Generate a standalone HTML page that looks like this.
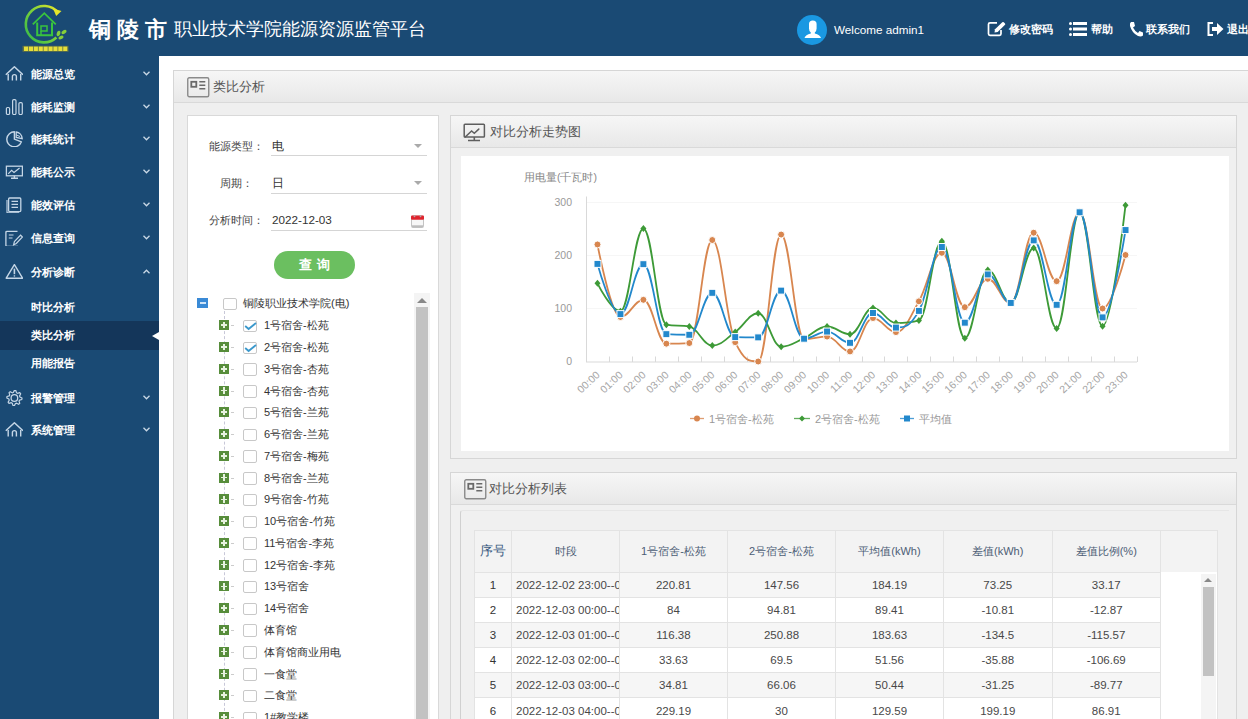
<!DOCTYPE html>
<html><head><meta charset="utf-8">
<style>
*{box-sizing:border-box}
html,body{margin:0;padding:0}
body{width:1248px;height:719px;overflow:hidden;position:relative;background:#fff;font-family:"Liberation Sans",sans-serif;color:#333}
.abs{position:absolute}
#hdr{left:0;top:0;width:1248px;height:56px;background:#1a4a74}
#side{left:0;top:56px;width:159px;height:663px;background:#1a4a74}
.mi{position:absolute;left:0;width:159px;height:32px;color:#fff;font-size:11px;font-weight:bold}
.mi .ic{position:absolute;left:5px;top:8px;width:18px;height:16px}
.mi .tx{position:absolute;left:31px;top:0;line-height:32px;white-space:nowrap}
.mi .ch{position:absolute;left:143px;top:13px;width:7px;height:5px}
.sub{position:absolute;left:0;width:159px;height:28px;color:#fff;font-size:11px;font-weight:bold}
.sub .tx{position:absolute;left:31px;line-height:28px}
.panel{position:absolute;border:1px solid #d6d6d6;background:#f0f0f0;overflow:hidden}
.ph{position:absolute;left:0;top:0;right:0;height:31px;background:linear-gradient(#f6f6f6,#e8e8e8);border-bottom:1px solid #d9d9d9}
.pt{position:absolute;top:0;line-height:31px;font-size:13px;color:#555;white-space:nowrap}
.icbox{position:absolute;width:22px;height:19px;border:2px solid #777;border-radius:2px}
.tr{position:absolute;left:0;height:22px;font-size:11px;color:#333;white-space:nowrap}
.tr .pl{position:absolute;left:31px;top:6px;width:10px;height:10px;background:#578d3b}
.tr .pl:before{content:"";position:absolute;left:4.2px;top:1.8px;width:1.6px;height:6.4px;background:#e8f2e0}
.tr .pl:after{content:"";position:absolute;left:1.8px;top:4.2px;width:6.4px;height:1.6px;background:#e8f2e0}
.tr .dash{position:absolute;left:43px;top:11px;width:3px;height:1px;background:#ccc}
.tr .cb{position:absolute;left:55px;top:5.5px;width:14px;height:12.5px;border:1px solid #c8c8c8;border-radius:2px;background:#fff}
.tr .lb{position:absolute;left:76px;top:0;line-height:22px}
table{border-collapse:collapse}
#tbl td{border:1px solid #e3e3e3;height:25.2px;text-align:center;font-size:11.5px;color:#484848;padding:0;background:#fff}
#tbl tr.hd td{height:42px;background:#f3f3f3;color:#4c5d75;font-size:11px}
#tbl tr.g td{background:#f6f6f6}
</style></head>
<body>
<div id="hdr" class="abs">
  <!-- logo -->
  <svg class="abs" style="left:0;top:0" width="80" height="56" viewBox="0 0 80 56">
    <defs><linearGradient id="lg" x1="0" y1="1" x2="1" y2="0"><stop offset="0" stop-color="#2fb84a"/><stop offset="0.55" stop-color="#7ed23a"/><stop offset="1" stop-color="#e8e82a"/></linearGradient></defs>
    <path d="M57.94,12.50 A18.2,18.2 0 1 0 56.41,37.51" fill="none" stroke="url(#lg)" stroke-width="2.6"/>
    <path d="M53,8.6 L61.5,11 L56.2,16 Z" fill="#e4e62a"/>
    <path d="M32.8,24.3 L44.3,13.2 L55.8,24.3" fill="none" stroke="#39c43e" stroke-width="1.8"/>
    <path d="M37.2,22.5 V35.3 H52 V22.5" fill="none" stroke="#39c43e" stroke-width="2"/>
    <rect x="41" y="26" width="6" height="5" fill="none" stroke="#39c43e" stroke-width="1.5"/>
    <path d="M41,31 V35" stroke="#39c43e" stroke-width="1.5"/>
    <ellipse cx="58.5" cy="33.5" rx="1.8" ry="2.8" fill="#86cf3a" transform="rotate(20 58.5 33.5)"/>
    <ellipse cx="64" cy="32" rx="2.8" ry="1.8" fill="#86cf3a" transform="rotate(-30 64 32)"/>
    <ellipse cx="61" cy="37.5" rx="2.6" ry="1.7" fill="#86cf3a" transform="rotate(-20 61 37.5)"/>
    <rect x="22.5" y="45.8" width="46" height="6" fill="#8a8a30" opacity="0.6"/>
    <rect x="24.0" y="46.6" width="4.1" height="4.4" fill="#e6de3a"/><rect x="28.9" y="46.6" width="4.1" height="4.4" fill="#e6de3a"/><rect x="33.8" y="46.6" width="4.1" height="4.4" fill="#e6de3a"/><rect x="38.7" y="46.6" width="4.1" height="4.4" fill="#e6de3a"/><rect x="43.6" y="46.6" width="4.1" height="4.4" fill="#e6de3a"/><rect x="48.5" y="46.6" width="4.1" height="4.4" fill="#e6de3a"/><rect x="53.4" y="46.6" width="4.1" height="4.4" fill="#e6de3a"/><rect x="58.3" y="46.6" width="4.1" height="4.4" fill="#e6de3a"/><rect x="63.2" y="46.6" width="4.1" height="4.4" fill="#e6de3a"/>
  </svg>
  <div class="abs" style="left:89px;top:16px;font-size:22px;font-weight:bold;color:#fff;letter-spacing:6px;line-height:28px;font-family:'Liberation Serif',serif">铜陵市</div>
  <div class="abs" style="left:174px;top:16.5px;font-size:18px;color:#fff;line-height:24px;white-space:nowrap">职业技术学院能源资源监管平台</div>
  <div class="abs" style="left:797px;top:15px;width:30px;height:30px;border-radius:50%;background:#1a98e2;overflow:hidden">
    <svg width="30" height="30" viewBox="0 0 30 30"><path d="M12,9 Q12,5.5 15.8,5.5 Q19.6,5.5 19.6,9 V13.5 Q19.6,16 17.8,17.5 V18.5 Q23,19.5 24,23 H7.5 Q8.5,19.5 13.8,18.5 V17.5 Q12,16 12,13.5 Z" fill="#fff"/></svg>
  </div>
  <div class="abs" style="left:834px;top:23px;font-size:11.7px;color:#fff;line-height:14px;white-space:nowrap">Welcome admin1</div>
  <svg class="abs" style="left:987px;top:21px" width="20" height="16" viewBox="0 0 20 16"><path d="M10,1.8 H3 Q1.5,1.8 1.5,3.3 V12.8 Q1.5,14.3 3,14.3 H12.5 Q14,14.3 14,12.8 V9" fill="none" stroke="#fff" stroke-width="1.7"/><path d="M7.5,11.5 L8,8.3 L15.3,1.2 Q16,0.6 16.8,1.3 L18,2.5 Q18.6,3.2 18,3.8 L10.7,11 Z" fill="#fff"/></svg>
  <div class="abs" style="left:1009px;top:22px;font-size:10.7px;font-weight:bold;color:#fff;line-height:14px;white-space:nowrap">修改密码</div>
  <svg class="abs" style="left:1069px;top:22px" width="18" height="14" viewBox="0 0 18 14"><circle cx="1.5" cy="1.5" r="1.5" fill="#fff"/><circle cx="1.5" cy="7" r="1.5" fill="#fff"/><circle cx="1.5" cy="12.5" r="1.5" fill="#fff"/><rect x="4" y="0" width="14" height="3" fill="#fff"/><rect x="4" y="5.5" width="14" height="3" fill="#fff"/><rect x="4" y="11" width="14" height="3" fill="#fff"/></svg>
  <div class="abs" style="left:1091px;top:22px;font-size:10.7px;font-weight:bold;color:#fff;line-height:14px;white-space:nowrap">帮助</div>
  <svg class="abs" style="left:1129px;top:21px" width="15" height="16" viewBox="0 0 15 16"><path d="M2,1 L5,1 L6,5 L4,6.5 Q6,10.5 9,12 L10.5,10 L14,11.5 L14,14.5 Q12,16 9,15 Q3,12 1,5 Q0.5,2 2,1 Z" fill="#fff"/></svg>
  <div class="abs" style="left:1146px;top:22px;font-size:10.7px;font-weight:bold;color:#fff;line-height:14px;white-space:nowrap">联系我们</div>
  <svg class="abs" style="left:1207px;top:22px" width="17" height="14" viewBox="0 0 17 14"><path d="M6,1 H1.5 V13 H6" fill="none" stroke="#fff" stroke-width="2"/><path d="M5,5 H10 V1 L16.5,7 L10,13 V9 H5 Z" fill="#fff"/></svg>
  <div class="abs" style="left:1227px;top:22px;font-size:10.7px;font-weight:bold;color:#fff;line-height:14px;white-space:nowrap">退出</div>
</div>

<div id="side" class="abs">
<div class="mi" style="top:2px"><svg class="ic" viewBox="0 0 18 16"><path d="M0.8,8.8 L9.4,0.8 L18,8.8" fill="none" stroke="#c5d6e6" stroke-width="1.5" stroke-linejoin="round"/><path d="M3.2,8 V14.5 M15.7,8 V14.5 M7.4,14.5 V10.5 Q7.4,8.6 9.4,8.6 Q11.4,8.6 11.4,10.5 V14.5" fill="none" stroke="#c5d6e6" stroke-width="1.4"/></svg><div class="tx">能源总览</div><svg class="ch" viewBox="0 0 7 5"><path d="M0.5,0.8 L3.5,3.8 L6.5,0.8" fill="none" stroke="#c9d8e6" stroke-width="1.3"/></svg></div>
<div class="mi" style="top:34.5px"><svg class="ic" viewBox="0 0 18 16"><rect x="1.4" y="8.5" width="3.2" height="7" rx="1.2" fill="none" stroke="#c5d6e6" stroke-width="1.2"/><rect x="7.6" y="0.6" width="3.4" height="14.9" rx="1.2" fill="none" stroke="#c5d6e6" stroke-width="1.2"/><rect x="13.9" y="3.6" width="3.4" height="11.9" rx="1.2" fill="none" stroke="#c5d6e6" stroke-width="1.2"/></svg><div class="tx">能耗监测</div><svg class="ch" viewBox="0 0 7 5"><path d="M0.5,0.8 L3.5,3.8 L6.5,0.8" fill="none" stroke="#c9d8e6" stroke-width="1.3"/></svg></div>
<div class="mi" style="top:67px"><svg class="ic" viewBox="0 0 18 16"><path d="M9.4,0.8 A7.5,7.5 0 1 0 16.4,10.8 L9.4,8.2 Z" fill="none" stroke="#c5d6e6" stroke-width="1.4" stroke-linejoin="round"/><path d="M11.2,1 A7,7 0 0 1 17.2,7.6 L11.2,6.5 Z" fill="none" stroke="#c5d6e6" stroke-width="1.3"/><path d="M11.5,4 L15,5.5" stroke="#c5d6e6" stroke-width="1"/></svg><div class="tx">能耗统计</div><svg class="ch" viewBox="0 0 7 5"><path d="M0.5,0.8 L3.5,3.8 L6.5,0.8" fill="none" stroke="#c9d8e6" stroke-width="1.3"/></svg></div>
<div class="mi" style="top:100px"><svg class="ic" viewBox="0 0 18 16"><rect x="1.4" y="2.2" width="16" height="9.6" fill="none" stroke="#c5d6e6" stroke-width="1.3"/><path d="M3.2,9.8 L6.6,6.4 L9,8.4 L14.6,4" fill="none" stroke="#c5d6e6" stroke-width="1.2"/><path d="M6,14.2 H13 M9.4,11.8 V14" stroke="#c5d6e6" stroke-width="1.4"/></svg><div class="tx">能耗公示</div><svg class="ch" viewBox="0 0 7 5"><path d="M0.5,0.8 L3.5,3.8 L6.5,0.8" fill="none" stroke="#c9d8e6" stroke-width="1.3"/></svg></div>
<div class="mi" style="top:132.5px"><svg class="ic" viewBox="0 0 18 16"><rect x="3.6" y="1" width="12.2" height="13.6" rx="1" fill="none" stroke="#c5d6e6" stroke-width="1.3"/><path d="M2,3 V15.8 H14" fill="none" stroke="#c5d6e6" stroke-width="1.1"/><path d="M6.5,4.4 H13 M6.5,7.3 H13 M6.5,10.4 H13" stroke="#c5d6e6" stroke-width="1.3"/></svg><div class="tx">能效评估</div><svg class="ch" viewBox="0 0 7 5"><path d="M0.5,0.8 L3.5,3.8 L6.5,0.8" fill="none" stroke="#c9d8e6" stroke-width="1.3"/></svg></div>
<div class="mi" style="top:165.5px"><svg class="ic" viewBox="0 0 18 16"><path d="M12.5,1.3 H2 Q0.9,1.3 0.9,2.4 V15.2 Q0.9,16.3 2,16.3 H13" fill="none" stroke="#c5d6e6" stroke-width="1.3"/><path d="M3.8,5 H8.5 M3.8,8 H7.5" stroke="#c5d6e6" stroke-width="1.2"/><path d="M8.6,14.8 L9.4,11.6 L15.6,5.2 L17.5,7 L11.3,13.5 Z" fill="none" stroke="#c5d6e6" stroke-width="1.2"/></svg><div class="tx">信息查询</div><svg class="ch" viewBox="0 0 7 5"><path d="M0.5,0.8 L3.5,3.8 L6.5,0.8" fill="none" stroke="#c9d8e6" stroke-width="1.3"/></svg></div>
<div class="mi" style="top:199.5px"><svg class="ic" viewBox="0 0 18 16"><path d="M9.4,0.6 L17.6,14.2 H1.2 Z" fill="none" stroke="#c5d6e6" stroke-width="1.4" stroke-linejoin="round"/><path d="M9.4,4.6 V10.2" stroke="#c5d6e6" stroke-width="1.6"/><path d="M9.4,11.3 V12.6" stroke="#c5d6e6" stroke-width="1.4"/></svg><div class="tx">分析诊断</div><svg class="ch" viewBox="0 0 7 5"><path d="M0.5,4.2 L3.5,1.2 L6.5,4.2" fill="none" stroke="#c9d8e6" stroke-width="1.3"/></svg></div>
<div class="mi" style="top:325.5px"><svg class="ic" viewBox="0 0 18 16"><path d="M9.40,0.40 L10.88,0.55 L11.54,2.83 L12.51,3.34 L14.77,2.63 L15.72,3.78 L14.57,5.86 L14.89,6.91 L17.00,8.00 L16.85,9.48 L14.57,10.14 L14.06,11.11 L14.77,13.37 L13.62,14.32 L11.54,13.17 L10.49,13.49 L9.40,15.60 L7.92,15.45 L7.26,13.17 L6.29,12.66 L4.03,13.37 L3.08,12.22 L4.23,10.14 L3.91,9.09 L1.80,8.00 L1.95,6.52 L4.23,5.86 L4.74,4.89 L4.03,2.63 L5.18,1.68 L7.26,2.83 L8.31,2.51 Z" fill="none" stroke="#c5d6e6" stroke-width="1.2" stroke-linejoin="round"/><circle cx="9.4" cy="8" r="3.3" fill="none" stroke="#c5d6e6" stroke-width="1.3"/></svg><div class="tx">报警管理</div><svg class="ch" viewBox="0 0 7 5"><path d="M0.5,0.8 L3.5,3.8 L6.5,0.8" fill="none" stroke="#c9d8e6" stroke-width="1.3"/></svg></div>
<div class="mi" style="top:358px"><svg class="ic" viewBox="0 0 18 16"><path d="M0.8,8.8 L9.4,0.8 L18,8.8" fill="none" stroke="#c5d6e6" stroke-width="1.5" stroke-linejoin="round"/><path d="M3.2,8 V14.5 M15.7,8 V14.5 M7.4,14.5 V10.5 Q7.4,8.6 9.4,8.6 Q11.4,8.6 11.4,10.5 V14.5" fill="none" stroke="#c5d6e6" stroke-width="1.4"/></svg><div class="tx">系统管理</div><svg class="ch" viewBox="0 0 7 5"><path d="M0.5,0.8 L3.5,3.8 L6.5,0.8" fill="none" stroke="#c9d8e6" stroke-width="1.3"/></svg></div>
<div class="abs" style="left:0;top:265px;width:159px;height:29px;background:#14365a"></div>
<div class="sub" style="top:237px"><div class="tx">时比分析</div></div>
<div class="sub" style="top:265px"><div class="tx">类比分析</div></div>
<div class="sub" style="top:292.5px"><div class="tx">用能报告</div></div>
<div class="abs" style="left:152px;top:275.5px;width:0;height:0;border-top:4.5px solid transparent;border-bottom:4.5px solid transparent;border-right:7px solid #fff"></div>
</div>

<!-- outer panel -->
<div class="panel" style="left:173px;top:70px;width:1090px;height:670px;background:#efefef">
  <div class="ph" style="height:32px"></div>
  <svg class="abs" style="left:12.5px;top:6px" width="23" height="21" viewBox="0 0 23 21"><rect x="0.75" y="0.75" width="21" height="19" rx="1.5" fill="none" stroke="#8a8a8a" stroke-width="1.4"/><rect x="4.3" y="4.8" width="5" height="5" fill="none" stroke="#6a6a6a" stroke-width="1.8"/><path d="M12.3,4.8 H18.3 M12.3,8.3 H18.3 M12.3,11.8 H18.3" stroke="#6a6a6a" stroke-width="1.6"/></svg>
  <div class="pt" style="left:39px;line-height:32px;font-size:13px;color:#555">类比分析</div>
</div>

<!-- left panel -->
<div class="abs" style="left:187px;top:115px;width:252px;height:620px;background:#fff;border:1px solid #d9d9d9">
<div class="abs" style="left:21px;top:21.5px;font-size:11px;color:#444;line-height:16px;white-space:nowrap">能源类型：</div>
<div class="abs" style="left:84px;top:21.5px;font-size:11.7px;color:#333;line-height:16px;white-space:nowrap">电</div>
<div class="abs" style="left:83px;top:39px;width:156px;height:1px;background:#d5d5d5"></div>
<div class="abs" style="left:226px;top:28px;width:0;height:0;border-left:4.5px solid transparent;border-right:4.5px solid transparent;border-top:4.5px solid #aaa"></div>
<div class="abs" style="left:32px;top:58.5px;font-size:11px;color:#444;line-height:16px;white-space:nowrap">周期：</div>
<div class="abs" style="left:84px;top:58.5px;font-size:11.7px;color:#333;line-height:16px;white-space:nowrap">日</div>
<div class="abs" style="left:83px;top:77px;width:156px;height:1px;background:#d5d5d5"></div>
<div class="abs" style="left:226px;top:65px;width:0;height:0;border-left:4.5px solid transparent;border-right:4.5px solid transparent;border-top:4.5px solid #aaa"></div>
<div class="abs" style="left:21px;top:95.5px;font-size:11px;color:#444;line-height:16px;white-space:nowrap">分析时间：</div>
<div class="abs" style="left:84px;top:95.5px;font-size:11.7px;color:#333;line-height:16px;white-space:nowrap">2022-12-03</div>
<div class="abs" style="left:83px;top:114px;width:156px;height:1px;background:#d5d5d5"></div>
<svg class="abs" style="left:223px;top:98.5px" width="13" height="13" viewBox="0 0 13 13"><rect x="0.5" y="1" width="12" height="11.5" rx="1" fill="#f7f7f7" stroke="#c4c4c4"/><rect x="0" y="0.5" width="13" height="4.3" rx="1" fill="#e0242e"/><rect x="1" y="10.3" width="11" height="2" fill="#bdbdbd"/><circle cx="3.5" cy="1.3" r="0.9" fill="#aaa"/><circle cx="9.5" cy="1.3" r="0.9" fill="#aaa"/></svg>
<div class="abs" style="left:86px;top:134.5px;width:81px;height:28.5px;border-radius:15px;background:#6bbf60;color:#fff;font-size:13px;font-weight:bold;text-align:center;line-height:27px;letter-spacing:5px;text-indent:5px">查询</div>
<div class="abs" style="left:9px;top:182px;width:11px;height:10px;background:#3a8ad6"><div class="abs" style="left:2.5px;top:4.2px;width:6px;height:1.6px;background:#cfe4f8"></div></div>
<div class="abs" style="left:35px;top:181.5px;width:14px;height:12.5px;border:1px solid #c8c8c8;border-radius:2px;background:#fff"></div>
<div class="abs" style="left:55px;top:179px;font-size:11px;color:#333;line-height:16px;white-space:nowrap">铜陵职业技术学院(电)</div>
<div class="abs" style="left:36px;top:195px;width:0;height:420px;border-left:1px dashed #c8c8d8"></div>
<div class="tr" style="top:198.3px;left:0px;width:220px"><div class="pl"></div><div class="dash"></div><div class="cb"><svg class="abs" style="left:0;top:0" width="13" height="11" viewBox="0 0 13 11"><path d="M1.2,5 L4.6,8 L12,2" fill="none" stroke="#3a98cc" stroke-width="1.8"/></svg></div><div class="lb">1号宿舍-松苑</div></div>
<div class="tr" style="top:220.1px;left:0px;width:220px"><div class="pl"></div><div class="dash"></div><div class="cb"><svg class="abs" style="left:0;top:0" width="13" height="11" viewBox="0 0 13 11"><path d="M1.2,5 L4.6,8 L12,2" fill="none" stroke="#3a98cc" stroke-width="1.8"/></svg></div><div class="lb">2号宿舍-松苑</div></div>
<div class="tr" style="top:241.8px;left:0px;width:220px"><div class="pl"></div><div class="dash"></div><div class="cb"></div><div class="lb">3号宿舍-杏苑</div></div>
<div class="tr" style="top:263.6px;left:0px;width:220px"><div class="pl"></div><div class="dash"></div><div class="cb"></div><div class="lb">4号宿舍-杏苑</div></div>
<div class="tr" style="top:285.3px;left:0px;width:220px"><div class="pl"></div><div class="dash"></div><div class="cb"></div><div class="lb">5号宿舍-兰苑</div></div>
<div class="tr" style="top:307.1px;left:0px;width:220px"><div class="pl"></div><div class="dash"></div><div class="cb"></div><div class="lb">6号宿舍-兰苑</div></div>
<div class="tr" style="top:328.9px;left:0px;width:220px"><div class="pl"></div><div class="dash"></div><div class="cb"></div><div class="lb">7号宿舍-梅苑</div></div>
<div class="tr" style="top:350.6px;left:0px;width:220px"><div class="pl"></div><div class="dash"></div><div class="cb"></div><div class="lb">8号宿舍-兰苑</div></div>
<div class="tr" style="top:372.4px;left:0px;width:220px"><div class="pl"></div><div class="dash"></div><div class="cb"></div><div class="lb">9号宿舍-竹苑</div></div>
<div class="tr" style="top:394.1px;left:0px;width:220px"><div class="pl"></div><div class="dash"></div><div class="cb"></div><div class="lb">10号宿舍-竹苑</div></div>
<div class="tr" style="top:415.9px;left:0px;width:220px"><div class="pl"></div><div class="dash"></div><div class="cb"></div><div class="lb">11号宿舍-李苑</div></div>
<div class="tr" style="top:437.7px;left:0px;width:220px"><div class="pl"></div><div class="dash"></div><div class="cb"></div><div class="lb">12号宿舍-李苑</div></div>
<div class="tr" style="top:459.4px;left:0px;width:220px"><div class="pl"></div><div class="dash"></div><div class="cb"></div><div class="lb">13号宿舍</div></div>
<div class="tr" style="top:481.2px;left:0px;width:220px"><div class="pl"></div><div class="dash"></div><div class="cb"></div><div class="lb">14号宿舍</div></div>
<div class="tr" style="top:502.9px;left:0px;width:220px"><div class="pl"></div><div class="dash"></div><div class="cb"></div><div class="lb">体育馆</div></div>
<div class="tr" style="top:524.7px;left:0px;width:220px"><div class="pl"></div><div class="dash"></div><div class="cb"></div><div class="lb">体育馆商业用电</div></div>
<div class="tr" style="top:546.5px;left:0px;width:220px"><div class="pl"></div><div class="dash"></div><div class="cb"></div><div class="lb">一食堂</div></div>
<div class="tr" style="top:568.2px;left:0px;width:220px"><div class="pl"></div><div class="dash"></div><div class="cb"></div><div class="lb">二食堂</div></div>
<div class="tr" style="top:590.0px;left:0px;width:220px"><div class="pl"></div><div class="dash"></div><div class="cb"></div><div class="lb">1#教学楼</div></div>
<div class="abs" style="left:226px;top:177px;width:16px;height:440px;background:#f4f4f4"></div>
<div class="abs" style="left:229px;top:182px;width:0;height:0;border-left:5px solid transparent;border-right:5px solid transparent;border-bottom:5px solid #888"></div>
<div class="abs" style="left:228px;top:191px;width:12px;height:420px;background:#c2c2c2"></div>
</div>

<!-- chart panel -->
<div class="panel" style="left:450px;top:115px;width:787px;height:344px">
  <div class="ph" style="height:32px"></div>
  <div class="abs" style="left:10px;top:39.5px;width:768px;height:295px;background:#fff"></div>
  <div class="pt" style="left:39px;line-height:32px">对比分析走势图</div>
</div>
<svg class="abs" style="left:0;top:0" width="1248" height="719">
<g font-family="Liberation Sans, sans-serif">
<line x1="586" y1="308.5" x2="1137" y2="308.5" stroke="#f6f6f6" stroke-width="1"/>
<line x1="586" y1="255.5" x2="1137" y2="255.5" stroke="#f6f6f6" stroke-width="1"/>
<line x1="586" y1="202.5" x2="1137" y2="202.5" stroke="#f6f6f6" stroke-width="1"/>
<line x1="586.5" y1="196.5" x2="586.5" y2="362.0" stroke="#d9d9d9" stroke-width="1"/>
<line x1="586" y1="362.0" x2="1137" y2="362.0" stroke="#d9d9d9" stroke-width="1"/>
<line x1="609.5" y1="356.5" x2="609.5" y2="362.0" stroke="#d9d9d9" stroke-width="1"/>
<line x1="632.5" y1="356.5" x2="632.5" y2="362.0" stroke="#d9d9d9" stroke-width="1"/>
<line x1="655.5" y1="356.5" x2="655.5" y2="362.0" stroke="#d9d9d9" stroke-width="1"/>
<line x1="678.5" y1="356.5" x2="678.5" y2="362.0" stroke="#d9d9d9" stroke-width="1"/>
<line x1="701.5" y1="356.5" x2="701.5" y2="362.0" stroke="#d9d9d9" stroke-width="1"/>
<line x1="724.5" y1="356.5" x2="724.5" y2="362.0" stroke="#d9d9d9" stroke-width="1"/>
<line x1="747.5" y1="356.5" x2="747.5" y2="362.0" stroke="#d9d9d9" stroke-width="1"/>
<line x1="770.5" y1="356.5" x2="770.5" y2="362.0" stroke="#d9d9d9" stroke-width="1"/>
<line x1="793.5" y1="356.5" x2="793.5" y2="362.0" stroke="#d9d9d9" stroke-width="1"/>
<line x1="816.5" y1="356.5" x2="816.5" y2="362.0" stroke="#d9d9d9" stroke-width="1"/>
<line x1="839.5" y1="356.5" x2="839.5" y2="362.0" stroke="#d9d9d9" stroke-width="1"/>
<line x1="862.5" y1="356.5" x2="862.5" y2="362.0" stroke="#d9d9d9" stroke-width="1"/>
<line x1="884.5" y1="356.5" x2="884.5" y2="362.0" stroke="#d9d9d9" stroke-width="1"/>
<line x1="907.5" y1="356.5" x2="907.5" y2="362.0" stroke="#d9d9d9" stroke-width="1"/>
<line x1="930.5" y1="356.5" x2="930.5" y2="362.0" stroke="#d9d9d9" stroke-width="1"/>
<line x1="953.5" y1="356.5" x2="953.5" y2="362.0" stroke="#d9d9d9" stroke-width="1"/>
<line x1="976.5" y1="356.5" x2="976.5" y2="362.0" stroke="#d9d9d9" stroke-width="1"/>
<line x1="999.5" y1="356.5" x2="999.5" y2="362.0" stroke="#d9d9d9" stroke-width="1"/>
<line x1="1022.5" y1="356.5" x2="1022.5" y2="362.0" stroke="#d9d9d9" stroke-width="1"/>
<line x1="1045.5" y1="356.5" x2="1045.5" y2="362.0" stroke="#d9d9d9" stroke-width="1"/>
<line x1="1068.5" y1="356.5" x2="1068.5" y2="362.0" stroke="#d9d9d9" stroke-width="1"/>
<line x1="1091.5" y1="356.5" x2="1091.5" y2="362.0" stroke="#d9d9d9" stroke-width="1"/>
<line x1="1114.5" y1="356.5" x2="1114.5" y2="362.0" stroke="#d9d9d9" stroke-width="1"/>
<line x1="1137.5" y1="356.5" x2="1137.5" y2="362.0" stroke="#d9d9d9" stroke-width="1"/>
<path d="M597.48,244.47C597.48,244.47 611.25,316.98 620.44,316.98C629.62,316.98 634.21,299.82 643.40,299.82C652.58,299.82 657.17,343.68 666.35,343.68C675.54,343.68 680.13,343.68 689.31,343.05C698.50,342.43 703.09,240.03 712.27,240.03C721.45,240.03 726.05,322.81 735.23,342.15C744.41,361.50 749.00,361.50 758.19,361.50C767.37,361.50 771.96,234.56 781.15,234.56C790.33,234.56 794.92,339.24 804.10,339.24C813.29,339.24 817.88,336.59 827.06,336.59C836.25,336.59 840.84,351.43 850.02,351.43C859.20,351.43 863.80,318.04 872.98,318.04C882.16,318.04 886.75,332.08 895.94,332.08C905.12,332.08 909.71,317.19 918.90,301.35C928.08,285.50 932.67,252.85 941.85,252.85C951.04,252.85 955.63,307.18 964.81,307.18C974.00,307.18 978.59,278.82 987.77,278.82C996.95,278.82 1001.55,303.20 1010.73,303.20C1019.91,303.20 1024.50,232.71 1033.69,232.71C1042.87,232.71 1047.46,281.20 1056.65,281.20C1065.83,281.20 1070.42,212.57 1079.60,212.57C1088.79,212.57 1093.38,308.50 1102.56,308.50C1111.75,308.50 1125.52,254.97 1125.52,254.97" fill="none" stroke="#d8864f" stroke-width="1.8"/>
<path d="M597.48,283.29C597.48,283.29 611.25,311.25 620.44,311.25C629.62,311.25 634.21,228.53 643.40,228.53C652.58,228.53 657.17,322.84 666.35,324.67C675.54,326.49 680.13,324.67 689.31,326.49C698.50,328.31 703.09,345.60 712.27,345.60C721.45,345.60 726.05,338.55 735.23,332.08C744.41,325.62 749.00,313.27 758.19,313.27C767.37,313.27 771.96,346.66 781.15,346.66C790.33,346.66 794.92,342.21 804.10,338.18C813.29,334.15 817.88,326.52 827.06,326.52C836.25,326.52 840.84,334.20 850.02,334.20C859.20,334.20 863.80,307.97 872.98,307.97C882.16,307.97 886.75,323.07 895.94,323.07C905.12,323.07 909.71,323.07 918.90,320.43C928.08,317.78 932.67,241.19 941.85,241.19C951.04,241.19 955.63,338.18 964.81,338.18C974.00,338.18 978.59,270.07 987.77,270.07C996.95,270.07 1001.55,302.67 1010.73,302.67C1019.91,302.67 1024.50,248.08 1033.69,248.08C1042.87,248.08 1047.46,328.38 1056.65,328.38C1065.83,328.38 1070.42,212.04 1079.60,212.04C1088.79,212.04 1093.38,326.25 1102.56,326.25C1111.75,326.25 1125.52,205.15 1125.52,205.15" fill="none" stroke="#3d9a37" stroke-width="1.8"/>
<path d="M597.48,263.88C597.48,263.88 611.25,314.11 620.44,314.11C629.62,314.11 634.21,264.18 643.40,264.18C652.58,264.18 657.17,333.58 666.35,334.17C675.54,334.77 680.13,334.77 689.31,334.77C698.50,334.77 703.09,292.82 712.27,292.82C721.45,292.82 726.05,336.86 735.23,337.12C744.41,337.38 749.00,337.38 758.19,337.38C767.37,337.38 771.96,290.61 781.15,290.61C790.33,290.61 794.92,338.71 804.10,338.71C813.29,338.71 817.88,331.56 827.06,331.56C836.25,331.56 840.84,342.82 850.02,342.82C859.20,342.82 863.80,313.00 872.98,313.00C882.16,313.00 886.75,327.58 895.94,327.58C905.12,327.58 909.71,327.00 918.90,310.88C928.08,294.77 932.67,247.02 941.85,247.02C951.04,247.02 955.63,322.68 964.81,322.68C974.00,322.68 978.59,274.45 987.77,274.45C996.95,274.45 1001.55,302.94 1010.73,302.94C1019.91,302.94 1024.50,240.39 1033.69,240.39C1042.87,240.39 1047.46,304.79 1056.65,304.79C1065.83,304.79 1070.42,212.30 1079.60,212.30C1088.79,212.30 1093.38,317.38 1102.56,317.38C1111.75,317.38 1125.52,230.06 1125.52,230.06" fill="none" stroke="#2288cc" stroke-width="1.8"/>
<circle cx="597.48" cy="244.47" r="3.5" fill="#d8864f" stroke="#fff" stroke-width="1"/>
<circle cx="620.44" cy="316.98" r="3.5" fill="#d8864f" stroke="#fff" stroke-width="1"/>
<circle cx="643.40" cy="299.82" r="3.5" fill="#d8864f" stroke="#fff" stroke-width="1"/>
<circle cx="666.35" cy="343.68" r="3.5" fill="#d8864f" stroke="#fff" stroke-width="1"/>
<circle cx="689.31" cy="343.05" r="3.5" fill="#d8864f" stroke="#fff" stroke-width="1"/>
<circle cx="712.27" cy="240.03" r="3.5" fill="#d8864f" stroke="#fff" stroke-width="1"/>
<circle cx="735.23" cy="342.15" r="3.5" fill="#d8864f" stroke="#fff" stroke-width="1"/>
<circle cx="758.19" cy="361.50" r="3.5" fill="#d8864f" stroke="#fff" stroke-width="1"/>
<circle cx="781.15" cy="234.56" r="3.5" fill="#d8864f" stroke="#fff" stroke-width="1"/>
<circle cx="804.10" cy="339.24" r="3.5" fill="#d8864f" stroke="#fff" stroke-width="1"/>
<circle cx="827.06" cy="336.59" r="3.5" fill="#d8864f" stroke="#fff" stroke-width="1"/>
<circle cx="850.02" cy="351.43" r="3.5" fill="#d8864f" stroke="#fff" stroke-width="1"/>
<circle cx="872.98" cy="318.04" r="3.5" fill="#d8864f" stroke="#fff" stroke-width="1"/>
<circle cx="895.94" cy="332.08" r="3.5" fill="#d8864f" stroke="#fff" stroke-width="1"/>
<circle cx="918.90" cy="301.35" r="3.5" fill="#d8864f" stroke="#fff" stroke-width="1"/>
<circle cx="941.85" cy="252.85" r="3.5" fill="#d8864f" stroke="#fff" stroke-width="1"/>
<circle cx="964.81" cy="307.18" r="3.5" fill="#d8864f" stroke="#fff" stroke-width="1"/>
<circle cx="987.77" cy="278.82" r="3.5" fill="#d8864f" stroke="#fff" stroke-width="1"/>
<circle cx="1010.73" cy="303.20" r="3.5" fill="#d8864f" stroke="#fff" stroke-width="1"/>
<circle cx="1033.69" cy="232.71" r="3.5" fill="#d8864f" stroke="#fff" stroke-width="1"/>
<circle cx="1056.65" cy="281.20" r="3.5" fill="#d8864f" stroke="#fff" stroke-width="1"/>
<circle cx="1079.60" cy="212.57" r="3.5" fill="#d8864f" stroke="#fff" stroke-width="1"/>
<circle cx="1102.56" cy="308.50" r="3.5" fill="#d8864f" stroke="#fff" stroke-width="1"/>
<circle cx="1125.52" cy="254.97" r="3.5" fill="#d8864f" stroke="#fff" stroke-width="1"/>
<path d="M597.48,279.79L600.48,283.29L597.48,286.79L594.48,283.29Z" fill="#3d9a37"/>
<path d="M620.44,307.75L623.44,311.25L620.44,314.75L617.44,311.25Z" fill="#3d9a37"/>
<path d="M643.40,225.03L646.40,228.53L643.40,232.03L640.40,228.53Z" fill="#3d9a37"/>
<path d="M666.35,321.17L669.35,324.67L666.35,328.17L663.35,324.67Z" fill="#3d9a37"/>
<path d="M689.31,322.99L692.31,326.49L689.31,329.99L686.31,326.49Z" fill="#3d9a37"/>
<path d="M712.27,342.10L715.27,345.60L712.27,349.10L709.27,345.60Z" fill="#3d9a37"/>
<path d="M735.23,328.58L738.23,332.08L735.23,335.58L732.23,332.08Z" fill="#3d9a37"/>
<path d="M758.19,309.77L761.19,313.27L758.19,316.77L755.19,313.27Z" fill="#3d9a37"/>
<path d="M781.15,343.16L784.15,346.66L781.15,350.16L778.15,346.66Z" fill="#3d9a37"/>
<path d="M804.10,334.68L807.10,338.18L804.10,341.68L801.10,338.18Z" fill="#3d9a37"/>
<path d="M827.06,323.02L830.06,326.52L827.06,330.02L824.06,326.52Z" fill="#3d9a37"/>
<path d="M850.02,330.70L853.02,334.20L850.02,337.70L847.02,334.20Z" fill="#3d9a37"/>
<path d="M872.98,304.47L875.98,307.97L872.98,311.47L869.98,307.97Z" fill="#3d9a37"/>
<path d="M895.94,319.57L898.94,323.07L895.94,326.57L892.94,323.07Z" fill="#3d9a37"/>
<path d="M918.90,316.93L921.90,320.43L918.90,323.93L915.90,320.43Z" fill="#3d9a37"/>
<path d="M941.85,237.69L944.85,241.19L941.85,244.69L938.85,241.19Z" fill="#3d9a37"/>
<path d="M964.81,334.68L967.81,338.18L964.81,341.68L961.81,338.18Z" fill="#3d9a37"/>
<path d="M987.77,266.57L990.77,270.07L987.77,273.57L984.77,270.07Z" fill="#3d9a37"/>
<path d="M1010.73,299.17L1013.73,302.67L1010.73,306.17L1007.73,302.67Z" fill="#3d9a37"/>
<path d="M1033.69,244.58L1036.69,248.08L1033.69,251.58L1030.69,248.08Z" fill="#3d9a37"/>
<path d="M1056.65,324.88L1059.65,328.38L1056.65,331.88L1053.65,328.38Z" fill="#3d9a37"/>
<path d="M1079.60,208.54L1082.60,212.04L1079.60,215.54L1076.60,212.04Z" fill="#3d9a37"/>
<path d="M1102.56,322.75L1105.56,326.25L1102.56,329.75L1099.56,326.25Z" fill="#3d9a37"/>
<path d="M1125.52,201.65L1128.52,205.15L1125.52,208.65L1122.52,205.15Z" fill="#3d9a37"/>
<rect x="593.98" y="260.38" width="7" height="7" fill="#2288cc" stroke="#fff" stroke-width="1"/>
<rect x="616.94" y="310.61" width="7" height="7" fill="#2288cc" stroke="#fff" stroke-width="1"/>
<rect x="639.90" y="260.68" width="7" height="7" fill="#2288cc" stroke="#fff" stroke-width="1"/>
<rect x="662.85" y="330.67" width="7" height="7" fill="#2288cc" stroke="#fff" stroke-width="1"/>
<rect x="685.81" y="331.27" width="7" height="7" fill="#2288cc" stroke="#fff" stroke-width="1"/>
<rect x="708.77" y="289.32" width="7" height="7" fill="#2288cc" stroke="#fff" stroke-width="1"/>
<rect x="731.73" y="333.62" width="7" height="7" fill="#2288cc" stroke="#fff" stroke-width="1"/>
<rect x="754.69" y="333.88" width="7" height="7" fill="#2288cc" stroke="#fff" stroke-width="1"/>
<rect x="777.65" y="287.11" width="7" height="7" fill="#2288cc" stroke="#fff" stroke-width="1"/>
<rect x="800.60" y="335.21" width="7" height="7" fill="#2288cc" stroke="#fff" stroke-width="1"/>
<rect x="823.56" y="328.06" width="7" height="7" fill="#2288cc" stroke="#fff" stroke-width="1"/>
<rect x="846.52" y="339.32" width="7" height="7" fill="#2288cc" stroke="#fff" stroke-width="1"/>
<rect x="869.48" y="309.50" width="7" height="7" fill="#2288cc" stroke="#fff" stroke-width="1"/>
<rect x="892.44" y="324.08" width="7" height="7" fill="#2288cc" stroke="#fff" stroke-width="1"/>
<rect x="915.40" y="307.38" width="7" height="7" fill="#2288cc" stroke="#fff" stroke-width="1"/>
<rect x="938.35" y="243.52" width="7" height="7" fill="#2288cc" stroke="#fff" stroke-width="1"/>
<rect x="961.31" y="319.18" width="7" height="7" fill="#2288cc" stroke="#fff" stroke-width="1"/>
<rect x="984.27" y="270.95" width="7" height="7" fill="#2288cc" stroke="#fff" stroke-width="1"/>
<rect x="1007.23" y="299.44" width="7" height="7" fill="#2288cc" stroke="#fff" stroke-width="1"/>
<rect x="1030.19" y="236.89" width="7" height="7" fill="#2288cc" stroke="#fff" stroke-width="1"/>
<rect x="1053.15" y="301.29" width="7" height="7" fill="#2288cc" stroke="#fff" stroke-width="1"/>
<rect x="1076.10" y="208.80" width="7" height="7" fill="#2288cc" stroke="#fff" stroke-width="1"/>
<rect x="1099.06" y="313.88" width="7" height="7" fill="#2288cc" stroke="#fff" stroke-width="1"/>
<rect x="1122.02" y="226.56" width="7" height="7" fill="#2288cc" stroke="#fff" stroke-width="1"/>
<text x="572" y="364.7" text-anchor="end" font-size="10.5" fill="#999">0</text>
<text x="572" y="311.7" text-anchor="end" font-size="10.5" fill="#999">100</text>
<text x="572" y="258.7" text-anchor="end" font-size="10.5" fill="#999">200</text>
<text x="572" y="205.7" text-anchor="end" font-size="10.5" fill="#999">300</text>
<text transform="translate(600.5,375.8) rotate(-43)" text-anchor="end" font-size="10.5" fill="#a5a5a5">00:00</text>
<text transform="translate(623.4,375.8) rotate(-43)" text-anchor="end" font-size="10.5" fill="#a5a5a5">01:00</text>
<text transform="translate(646.4,375.8) rotate(-43)" text-anchor="end" font-size="10.5" fill="#a5a5a5">02:00</text>
<text transform="translate(669.4,375.8) rotate(-43)" text-anchor="end" font-size="10.5" fill="#a5a5a5">03:00</text>
<text transform="translate(692.3,375.8) rotate(-43)" text-anchor="end" font-size="10.5" fill="#a5a5a5">04:00</text>
<text transform="translate(715.3,375.8) rotate(-43)" text-anchor="end" font-size="10.5" fill="#a5a5a5">05:00</text>
<text transform="translate(738.2,375.8) rotate(-43)" text-anchor="end" font-size="10.5" fill="#a5a5a5">06:00</text>
<text transform="translate(761.2,375.8) rotate(-43)" text-anchor="end" font-size="10.5" fill="#a5a5a5">07:00</text>
<text transform="translate(784.1,375.8) rotate(-43)" text-anchor="end" font-size="10.5" fill="#a5a5a5">08:00</text>
<text transform="translate(807.1,375.8) rotate(-43)" text-anchor="end" font-size="10.5" fill="#a5a5a5">09:00</text>
<text transform="translate(830.1,375.8) rotate(-43)" text-anchor="end" font-size="10.5" fill="#a5a5a5">10:00</text>
<text transform="translate(853.0,375.8) rotate(-43)" text-anchor="end" font-size="10.5" fill="#a5a5a5">11:00</text>
<text transform="translate(876.0,375.8) rotate(-43)" text-anchor="end" font-size="10.5" fill="#a5a5a5">12:00</text>
<text transform="translate(898.9,375.8) rotate(-43)" text-anchor="end" font-size="10.5" fill="#a5a5a5">13:00</text>
<text transform="translate(921.9,375.8) rotate(-43)" text-anchor="end" font-size="10.5" fill="#a5a5a5">14:00</text>
<text transform="translate(944.9,375.8) rotate(-43)" text-anchor="end" font-size="10.5" fill="#a5a5a5">15:00</text>
<text transform="translate(967.8,375.8) rotate(-43)" text-anchor="end" font-size="10.5" fill="#a5a5a5">16:00</text>
<text transform="translate(990.8,375.8) rotate(-43)" text-anchor="end" font-size="10.5" fill="#a5a5a5">17:00</text>
<text transform="translate(1013.7,375.8) rotate(-43)" text-anchor="end" font-size="10.5" fill="#a5a5a5">18:00</text>
<text transform="translate(1036.7,375.8) rotate(-43)" text-anchor="end" font-size="10.5" fill="#a5a5a5">19:00</text>
<text transform="translate(1059.6,375.8) rotate(-43)" text-anchor="end" font-size="10.5" fill="#a5a5a5">20:00</text>
<text transform="translate(1082.6,375.8) rotate(-43)" text-anchor="end" font-size="10.5" fill="#a5a5a5">21:00</text>
<text transform="translate(1105.6,375.8) rotate(-43)" text-anchor="end" font-size="10.5" fill="#a5a5a5">22:00</text>
<text transform="translate(1128.5,375.8) rotate(-43)" text-anchor="end" font-size="10.5" fill="#a5a5a5">23:00</text>
<text x="524" y="181" font-size="10.5" fill="#888">用电量(千瓦时)</text>
<line x1="690" y1="418.5" x2="704" y2="418.5" stroke="#d8864f" stroke-width="1.3" opacity="0.8"/><circle cx="697" cy="418.5" r="3" fill="#d8864f"/>
<text x="709" y="422.5" font-size="11" fill="#999">1号宿舍-松苑</text>
<line x1="794" y1="418.5" x2="810" y2="418.5" stroke="#3d9a37" stroke-width="1.3" opacity="0.8"/><path d="M802,415.5 L805,418.5 L802,421.5 L799,418.5 Z" fill="#3d9a37"/>
<text x="815" y="422.5" font-size="11" fill="#999">2号宿舍-松苑</text>
<line x1="900" y1="418.5" x2="914" y2="418.5" stroke="#2288cc" stroke-width="1.3" opacity="0.8"/><rect x="904" y="415.5" width="6" height="6" fill="#2288cc"/>
<text x="919" y="422.5" font-size="11" fill="#999">平均值</text>
<rect x="464.2" y="124.2" width="20.2" height="12.8" rx="0.8" fill="none" stroke="#5e5e5e" stroke-width="1.5"/><path d="M465.2,137 L471.6,130.9 L474.3,133.2 L478.8,129.1" fill="none" stroke="#5e5e5e" stroke-width="1.5" stroke-linecap="round"/><path d="M474.3,137 V140.5 M468,140.5 H480" fill="none" stroke="#5e5e5e" stroke-width="1.6"/>
</g>
</svg>

<!-- table panel -->
<div class="panel" style="left:450px;top:472px;width:787px;height:260px">
  <div class="ph" style="height:32px"></div>
  <svg class="abs" style="left:12.5px;top:6px" width="23" height="21" viewBox="0 0 23 21"><rect x="0.75" y="0.75" width="21" height="19" rx="1.5" fill="none" stroke="#8a8a8a" stroke-width="1.4"/><rect x="4.3" y="4.8" width="5" height="5" fill="none" stroke="#6a6a6a" stroke-width="1.8"/><path d="M12.3,4.8 H18.3 M12.3,8.3 H18.3 M12.3,11.8 H18.3" stroke="#6a6a6a" stroke-width="1.6"/></svg>
  <div class="pt" style="left:38px;line-height:32px">对比分析列表</div>
  <div class="abs" style="left:9px;top:36.5px;width:769px;height:240px;border-left:1px solid #d0d0d0;border-top:1px solid #e6e6e6;border-top-left-radius:3px;background:#f0f0f0"></div>
</div>
<div class="abs" style="left:474px;top:529.5px;width:744px;height:43px;background:#f3f3f3;border-top:1px solid #e3e3e3;border-right:1px solid #e3e3e3"></div>
<div class="abs" style="left:1160px;top:572px;width:58px;height:160px;background:#fff;border-right:1px solid #e3e3e3"></div>
<table id="tbl" class="abs" style="left:474px;top:529.5px;table-layout:fixed;width:686px">
<colgroup><col style="width:37px"><col style="width:108px"><col style="width:108px"><col style="width:108px"><col style="width:108px"><col style="width:108.5px"><col style="width:108.5px"></colgroup>
<tr class="hd"><td><span style="font-size:13px;color:#3b5b82">序号</span></td><td>时段</td><td>1号宿舍-松苑</td><td>2号宿舍-松苑</td><td>平均值(kWh)</td><td>差值(kWh)</td><td>差值比例(%)</td></tr>
<tr class="g"><td style="color:#333">1</td><td style="text-align:left;padding-left:4px;white-space:nowrap;overflow:hidden">2022-12-02 23:00--00:00</td><td>220.81</td><td>147.56</td><td>184.19</td><td>73.25</td><td>33.17</td></tr>
<tr><td style="color:#333">2</td><td style="text-align:left;padding-left:4px;white-space:nowrap;overflow:hidden">2022-12-03 00:00--01:00</td><td>84</td><td>94.81</td><td>89.41</td><td>-10.81</td><td>-12.87</td></tr>
<tr class="g"><td style="color:#333">3</td><td style="text-align:left;padding-left:4px;white-space:nowrap;overflow:hidden">2022-12-03 01:00--02:00</td><td>116.38</td><td>250.88</td><td>183.63</td><td>-134.5</td><td>-115.57</td></tr>
<tr><td style="color:#333">4</td><td style="text-align:left;padding-left:4px;white-space:nowrap;overflow:hidden">2022-12-03 02:00--03:00</td><td>33.63</td><td>69.5</td><td>51.56</td><td>-35.88</td><td>-106.69</td></tr>
<tr class="g"><td style="color:#333">5</td><td style="text-align:left;padding-left:4px;white-space:nowrap;overflow:hidden">2022-12-03 03:00--04:00</td><td>34.81</td><td>66.06</td><td>50.44</td><td>-31.25</td><td>-89.77</td></tr>
<tr><td style="color:#333">6</td><td style="text-align:left;padding-left:4px;white-space:nowrap;overflow:hidden">2022-12-03 04:00--05:00</td><td>229.19</td><td>30</td><td>129.59</td><td>199.19</td><td>86.91</td></tr>
<tr class="g"><td style="color:#333">7</td><td style="text-align:left;padding-left:4px;white-space:nowrap;overflow:hidden">2022-12-03 05:00--06:00</td><td>36.5</td><td>55.5</td><td>46</td><td>-19</td><td>-52.05</td></tr>
</table>
<div class="abs" style="left:1201px;top:574px;width:15px;height:150px;background:#f4f4f4"></div>
<div class="abs" style="left:1204px;top:578px;width:0;height:0;border-left:4.5px solid transparent;border-right:4.5px solid transparent;border-bottom:4.5px solid #888"></div>
<div class="abs" style="left:1203px;top:587px;width:11px;height:89px;background:#c2c2c2"></div>
</body></html>
